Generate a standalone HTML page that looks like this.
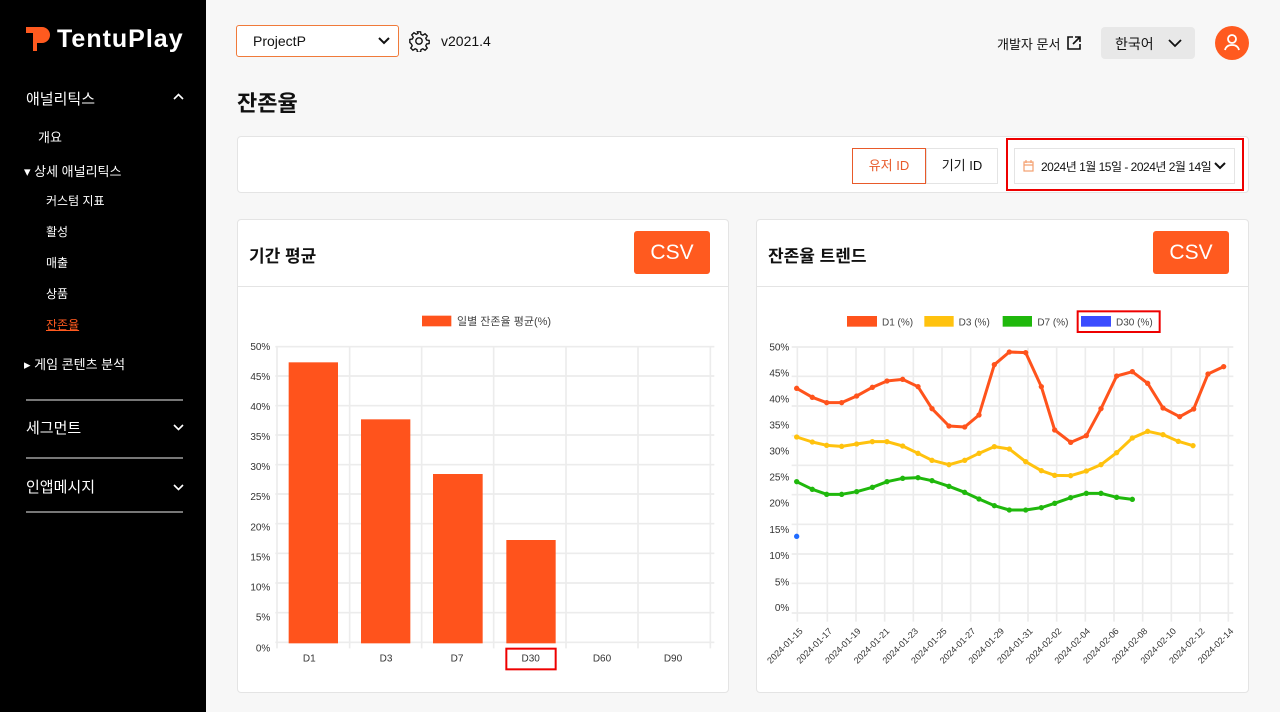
<!DOCTYPE html>
<html><head><meta charset="utf-8"><style>
*{margin:0;padding:0;box-sizing:border-box}
body{width:1280px;height:712px;overflow:hidden;background:#f7f7f7;font-family:"Liberation Sans","Noto Sans CJK KR",sans-serif;position:relative;color:#111}
.sb{position:absolute;left:0;top:0;width:206px;height:712px;background:#000;color:#fff}
.a{position:absolute;white-space:nowrap}
.card{position:absolute;background:#fff;border:1px solid #e4e4e4;border-radius:4px}
.hr{position:absolute;left:26px;width:157px;height:2px;background:#777}
.csv{position:absolute;background:#ff5a1f;color:#fff;font-size:21px;border-radius:3px;text-align:center;line-height:43px;width:76px;height:43px}
</style></head><body>
<div class="sb">
<svg class="a" style="left:26px;top:27px" width="24" height="24" viewBox="0 0 24 24"><path d="M0 0h16a8 8 0 0 1 0 16h-5v8h-4v-18h-7z" fill="#ff5a1f"/></svg>
<div class="a" style="left:57px;top:25px;font-size:25px;font-weight:bold;letter-spacing:1px">TentuPlay</div>
<div class="a" style="left:26px;top:88px;font-size:15px">애널리틱스</div>
<svg class="a" style="left:173px;top:93px" width="11" height="8"><path d="M1 6l4.5-4.5L10 6" stroke="#fff" stroke-width="1.6" fill="none"/></svg>
<div class="a" style="left:38px;top:127px;font-size:13px">개요</div>
<div class="a" style="left:24px;top:161px;font-size:13px">▾ 상세 애널리틱스</div>
<div class="a" style="left:46px;top:192px;font-size:12px">커스텀 지표</div>
<div class="a" style="left:46px;top:223px;font-size:12px">활성</div>
<div class="a" style="left:46px;top:254px;font-size:12px">매출</div>
<div class="a" style="left:46px;top:285px;font-size:12px">상품</div>
<div class="a" style="left:46px;top:316px;font-size:12px;color:#ff5a1f;text-decoration:underline">잔존율</div>
<div class="a" style="left:24px;top:354px;font-size:13px">▸ 게임 콘텐츠 분석</div>
<div class="hr" style="top:399px"></div>
<div class="a" style="left:26px;top:417px;font-size:15px">세그먼트</div>
<svg class="a" style="left:173px;top:423px" width="11" height="8"><path d="M1 2l4.5 4.5L10 2" stroke="#fff" stroke-width="1.6" fill="none"/></svg>
<div class="hr" style="top:457px"></div>
<div class="a" style="left:26px;top:476px;font-size:15px">인앱메시지</div>
<svg class="a" style="left:173px;top:483px" width="11" height="8"><path d="M1 2l4.5 4.5L10 2" stroke="#fff" stroke-width="1.6" fill="none"/></svg>
<div class="hr" style="top:511px"></div>
</div>

<div class="a" style="left:236px;top:25px;width:163px;height:32px;border:1px solid #f07a3a;border-radius:3px;background:#fff"></div>
<div class="a" style="left:253px;top:33px;font-size:14px">ProjectP</div>
<svg class="a" style="left:378px;top:36px" width="12" height="10"><path d="M1 2l5 5 5-5" stroke="#111" stroke-width="2" fill="none"/></svg>
<svg class="a" style="left:408px;top:30px" width="22" height="22" viewBox="0 0 24 24" fill="none" stroke="#111" stroke-width="1.5"><circle cx="12" cy="12" r="3.5"/><path d="M10.3 2h3.4l.5 2.8 2 .9 2.4-1.6 2.4 2.4-1.6 2.4.9 2 2.8.5v3.4l-2.8.5-.9 2 1.6 2.4-2.4 2.4-2.4-1.6-2 .9-.5 2.8h-3.4l-.5-2.8-2-.9-2.4 1.6-2.4-2.4 1.6-2.4-.9-2L2 13.7v-3.4l2.8-.5.9-2L4.1 5.4 6.5 3l2.4 1.6 2-.9z"/></svg>
<div class="a" style="left:441px;top:33px;font-size:14px">v2021.4</div>
<div class="a" style="left:997px;top:34px;font-size:13px">개발자 문서</div>
<svg class="a" style="left:1067px;top:36px" width="14" height="14" viewBox="0 0 14 14" fill="none" stroke="#111" stroke-width="1.6"><path d="M6 1H1v12h12V8M8 1h5v5M13 1L6 8"/></svg>
<div class="a" style="left:1101px;top:27px;width:94px;height:32px;background:#e8e8e8;border-radius:4px"></div>
<div class="a" style="left:1115px;top:34px;font-size:14px">한국어</div>
<svg class="a" style="left:1168px;top:38px" width="14" height="10"><path d="M1 2l6 6 6-6" stroke="#111" stroke-width="1.8" fill="none"/></svg>
<div class="a" style="left:1215px;top:26px;width:34px;height:34px;border-radius:50%;background:#ff5a1f"></div>
<svg class="a" style="left:1222px;top:32px" width="20" height="20" viewBox="0 0 20 20" fill="none" stroke="#fff" stroke-width="1.8"><circle cx="10" cy="7" r="4"/><path d="M3 18c1-4 4-5 7-5s6 1 7 5"/></svg>

<div class="a" style="left:237px;top:86px;font-size:22px;font-weight:bold">잔존율</div>

<div class="card" style="left:237px;top:136px;width:1012px;height:57px"></div>
<div class="a" style="left:852px;top:148px;width:74px;height:36px;border:1px solid #e85a2a;background:#fff;color:#e85a2a;font-size:13px;text-align:center;line-height:34px">유저 ID</div>
<div class="a" style="left:926px;top:148px;width:72px;height:36px;border:1px solid #e4e4e4;background:#fff;font-size:13px;text-align:center;line-height:34px">기기 ID</div>
<div class="a" style="left:1006px;top:138px;width:238px;height:53px;border:2px solid #e00"></div>
<div class="a" style="left:1014px;top:148px;width:221px;height:36px;border:1px solid #e4e4e4;background:#fff"></div>
<svg class="a" style="left:1023px;top:160px" width="11" height="12" viewBox="0 0 11 12" fill="none" stroke="#f4a070" stroke-width="1.2"><rect x="1" y="2" width="9" height="9"/><path d="M1 5h9M3 0v3M8 0v3"/></svg>
<div class="a" style="left:1041px;top:158px;font-size:12px;letter-spacing:-0.5px">2024년 1월 15일 - 2024년 2월 14일</div>
<svg class="a" style="left:1214px;top:161px" width="12" height="9"><path d="M1 2l5 5 5-5" stroke="#111" stroke-width="2" fill="none"/></svg>

<div class="card" style="left:237px;top:219px;width:492px;height:474px"></div>
<div class="a" style="left:238px;top:286px;width:490px;height:1px;background:#e4e4e4"></div>
<div class="a" style="left:249px;top:242px;font-size:17px;font-weight:bold">기간 평균</div>
<div class="csv" style="left:634px;top:231px">CSV</div>
<svg class="a" style="left:237px;top:300px" width="490" height="380" viewBox="0 0 1470 1140" font-family="Liberation Sans,Noto Sans CJK KR,sans-serif">
<g stroke="#ececec" stroke-width="5">
<path d="M115 140H1432M115 228H1432M115 317H1432M115 405H1432M115 494H1432M115 582H1432M115 671H1432M115 760H1432M115 849H1432M115 938H1432M115 1027H1432"/>
<path d="M120 140V1045M338 140V1045M554 140V1045M770 140V1045M987 140V1045M1203 140V1045M1420 140V1045"/></g>
<g fill="#ff531c"><rect x="155" y="187" width="148" height="843"/><rect x="372" y="358" width="148" height="672"/><rect x="588" y="522" width="149" height="508"/><rect x="808" y="720" width="148" height="310"/><rect x="555" y="47" width="88" height="32"/></g>
<text x="660" y="75" font-size="33" fill="#444">일별 잔존율 평균(%)</text>
<g font-size="30" fill="#333" text-anchor="end"><text x="100" y="150">50%</text><text x="100" y="240">45%</text><text x="100" y="330">40%</text><text x="100" y="420">35%</text><text x="100" y="510">30%</text><text x="100" y="600">25%</text><text x="100" y="692">20%</text><text x="100" y="782">15%</text><text x="100" y="872">10%</text><text x="100" y="962">5%</text><text x="100" y="1055">0%</text></g>
<g font-size="30" fill="#333" text-anchor="middle"><text x="217" y="1085">D1</text><text x="447" y="1085">D3</text><text x="660" y="1085">D7</text><text x="881" y="1085">D30</text><text x="1095" y="1085">D60</text><text x="1308" y="1085">D90</text></g>
<rect x="808" y="1046" width="148" height="62" fill="none" stroke="#e00" stroke-width="6"/>
</svg>

<div class="card" style="left:756px;top:219px;width:493px;height:474px"></div>
<div class="a" style="left:757px;top:286px;width:491px;height:1px;background:#e4e4e4"></div>
<div class="a" style="left:768px;top:242px;font-size:17px;font-weight:bold">잔존율 트렌드</div>
<div class="csv" style="left:1153px;top:231px">CSV</div>
<svg class="a" style="left:760px;top:290px" width="490" height="400" viewBox="0 0 1470 1200" font-family="Liberation Sans,sans-serif">
<defs>
<marker id="mo" markerUnits="userSpaceOnUse" markerWidth="20" markerHeight="20" refX="10" refY="10"><circle cx="10" cy="10" r="8" fill="#ff531c"/></marker>
<marker id="my" markerUnits="userSpaceOnUse" markerWidth="20" markerHeight="20" refX="10" refY="10"><circle cx="10" cy="10" r="8" fill="#ffc20e"/></marker>
<marker id="mg" markerUnits="userSpaceOnUse" markerWidth="20" markerHeight="20" refX="10" refY="10"><circle cx="10" cy="10" r="8" fill="#1fb80c"/></marker>
</defs>
<g stroke="#ececec" stroke-width="5">
<path d="M95 171H1420M95 259H1420M95 348H1420M95 437H1420M95 526H1420M95 614H1420M95 703H1420M95 792H1420M95 880H1420M95 969H1420"/>
<path d="M112 171V995M202 171V995M288 171V995M374 171V995M460 171V995M546 171V995M632 171V995M718 171V995M804 171V995M890 171V995M976 171V995M1062 171V995M1148 171V995M1234 171V995M1320 171V995M1405 171V995"/></g>
<rect x="261" y="78" width="90" height="32" fill="#ff531c"/><text x="366" y="106" font-size="30" fill="#444">D1 (%)</text>
<rect x="493" y="78" width="88" height="32" fill="#ffc20e"/><text x="596" y="106" font-size="30" fill="#444">D3 (%)</text>
<rect x="728" y="78" width="88" height="32" fill="#1fb80c"/><text x="832" y="106" font-size="30" fill="#444">D7 (%)</text>
<rect x="963" y="78" width="90" height="32" fill="#3a4cff"/><text x="1068" y="106" font-size="30" fill="#444">D30 (%)</text>
<rect x="953" y="64" width="246" height="62" fill="none" stroke="#e00" stroke-width="6"/>
<g font-size="30" fill="#333" text-anchor="end"><text x="88" y="181">50%</text><text x="88" y="259">45%</text><text x="88" y="338">40%</text><text x="88" y="416">35%</text><text x="88" y="494">30%</text><text x="88" y="572">25%</text><text x="88" y="650">20%</text><text x="88" y="729">15%</text><text x="88" y="807">10%</text><text x="88" y="886">5%</text><text x="88" y="963">0%</text></g>
<g font-size="27" fill="#333" text-anchor="end">
<text transform="translate(130,1025) rotate(-45)">2024-01-15</text><text transform="translate(218,1025) rotate(-45)">2024-01-17</text><text transform="translate(304,1025) rotate(-45)">2024-01-19</text><text transform="translate(390,1025) rotate(-45)">2024-01-21</text><text transform="translate(476,1025) rotate(-45)">2024-01-23</text><text transform="translate(562,1025) rotate(-45)">2024-01-25</text><text transform="translate(648,1025) rotate(-45)">2024-01-27</text><text transform="translate(734,1025) rotate(-45)">2024-01-29</text><text transform="translate(820,1025) rotate(-45)">2024-01-31</text><text transform="translate(906,1025) rotate(-45)">2024-02-02</text><text transform="translate(992,1025) rotate(-45)">2024-02-04</text><text transform="translate(1078,1025) rotate(-45)">2024-02-06</text><text transform="translate(1164,1025) rotate(-45)">2024-02-08</text><text transform="translate(1250,1025) rotate(-45)">2024-02-10</text><text transform="translate(1336,1025) rotate(-45)">2024-02-12</text><text transform="translate(1422,1025) rotate(-45)">2024-02-14</text></g>
<g fill="none" stroke-width="9" stroke-linejoin="round" stroke-linecap="round">
<polyline stroke="#ff531c" marker-start="url(#mo)" marker-mid="url(#mo)" marker-end="url(#mo)" points="110,295 157,322 200,338 245,338 290,318 337,292 381,273 428,268 474,290 516,356 567,408 614,411 657,375 703,224 748,186 797,188 844,290 884,420 932,457 979,437 1023,356 1070,258 1117,245 1163,280 1209,354 1259,380 1301,357 1344,252 1391,230"/>
<polyline stroke="#ffc20e" marker-start="url(#my)" marker-mid="url(#my)" marker-end="url(#my)" points="110,441 157,456 200,466 245,469 290,462 337,455 381,455 428,468 474,490 516,511 567,524 614,511 657,490 703,470 748,477 797,515 844,542 884,556 932,557 979,543 1023,524 1070,488 1117,444 1163,424 1209,434 1255,454 1299,467"/>
<polyline stroke="#1fb80c" marker-start="url(#mg)" marker-mid="url(#mg)" marker-end="url(#mg)" points="110,575 157,598 200,613 245,613 290,605 337,592 381,575 428,565 474,563 516,572 567,589 614,607 657,627 703,647 748,660 797,660 844,653 884,640 932,623 979,610 1023,610 1070,622 1117,628"/>
</g>
<circle cx="110" cy="739" r="8" fill="#1f6bff"/>
</svg>
</body></html>
